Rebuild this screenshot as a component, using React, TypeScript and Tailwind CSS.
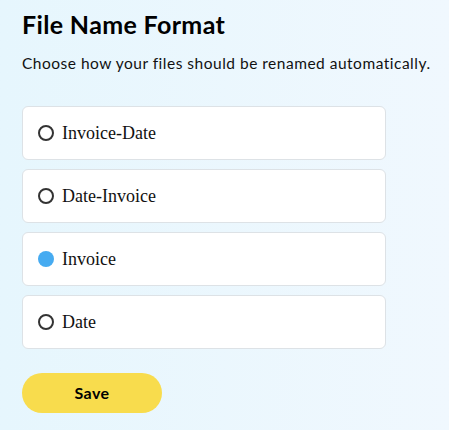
import { useState } from "react";

const options = ["Invoice-Date", "Date-Invoice", "Invoice", "Date"];

export default function App() {
  const [selected, setSelected] = useState("Invoice");

  return (
    <main className="min-h-[430px] w-full bg-gradient-to-r from-[#e6f6fd] to-[#f0f8fe] px-[22px] pt-[9px] pb-4 font-['Lato',sans-serif] text-black">
      <h1 className="text-[25px] font-bold leading-[30px] tracking-[0.35px]">File Name Format</h1>
      <p className="mt-[14px] whitespace-nowrap text-[15.5px] leading-5 tracking-[0.5px] text-[#111]">
        Choose how your files should be renamed automatically.
      </p>

      <div className="mt-[33px] flex w-[364px] flex-col gap-[9px]">
        {options.map((opt) => {
          const active = opt === selected;
          return (
            <button
              key={opt}
              type="button"
              onClick={() => setSelected(opt)}
              className="flex h-[54px] items-center gap-2 rounded-md border border-[#dde2e6] bg-white px-[15px] text-left"
            >
              {active ? (
                <span className="h-4 w-4 shrink-0 rounded-full bg-[#46abf1]" />
              ) : (
                <span className="h-4 w-4 shrink-0 rounded-full border-2 border-[#333]" />
              )}
              <span className="font-['Liberation_Serif',serif] text-[18px] text-[#111]">{opt}</span>
            </button>
          );
        })}
      </div>

      <button
        type="button"
        className="mt-[24px] h-10 w-[140px] rounded-full bg-[#f8dc4d] text-[16px] font-bold tracking-[0.4px] text-black"
      >
        Save
      </button>
    </main>
  );
}
